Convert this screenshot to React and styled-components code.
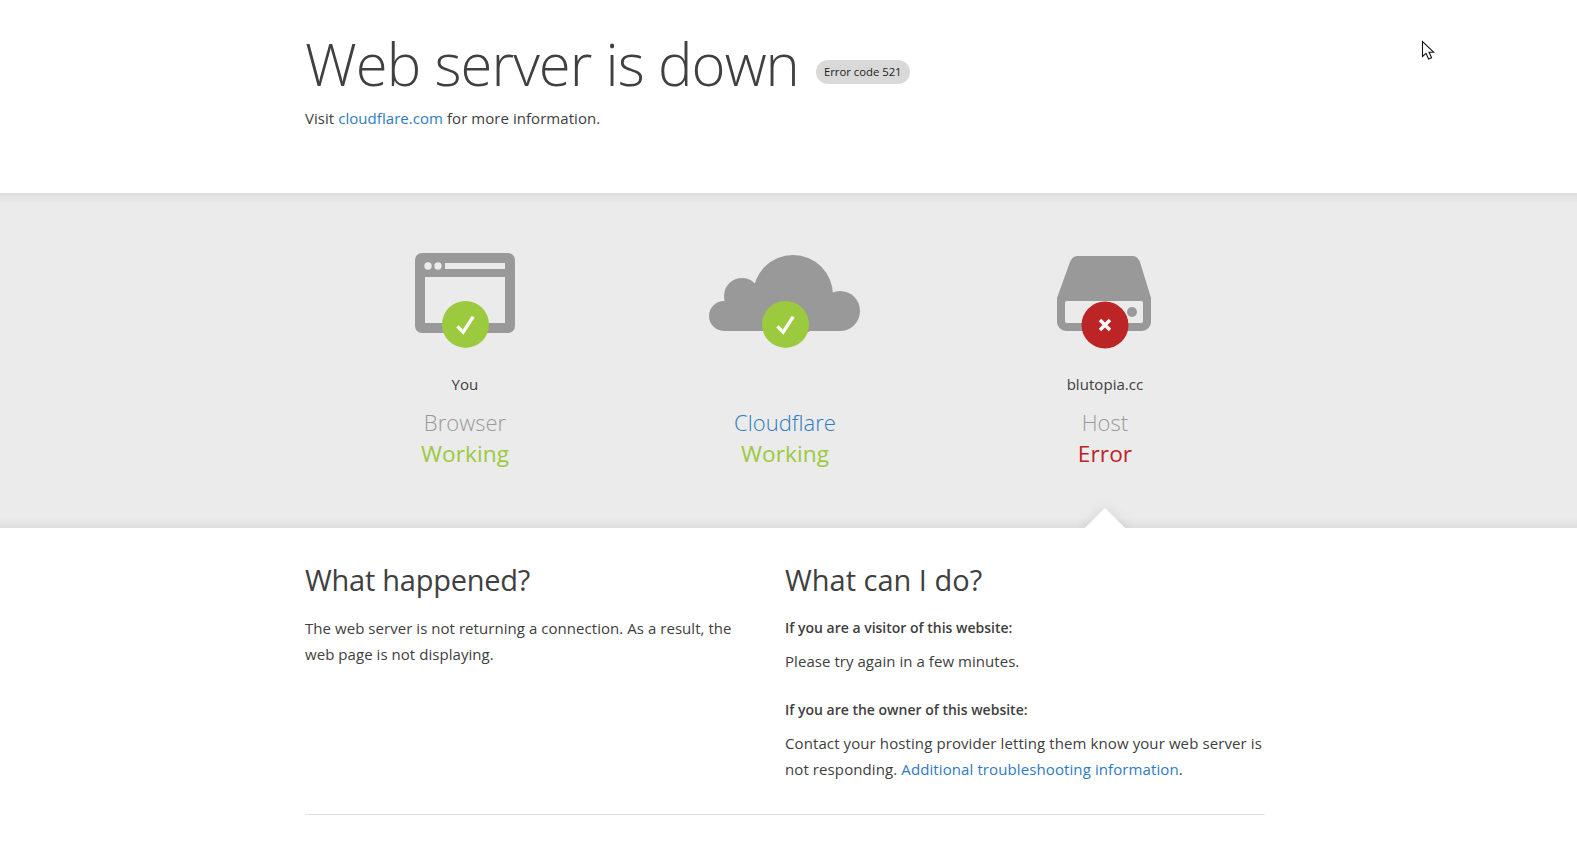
import React from "react";
import styled, { createGlobalStyle } from "styled-components";

const GlobalStyle = createGlobalStyle`
html, body { margin: 0; padding: 0; background: #fff; overflow: hidden; }
body {
  font-family: "Open Sans", "Noto Sans", "Liberation Sans", sans-serif;
  font-size: 15px;
  line-height: 26px;
  letter-spacing: 0.05px;
  color: #404040;
}
a { color: #2f7bbf; text-decoration: none; }
`;

const Page = styled.div`
  position: relative;
  height: 845px;
  overflow: hidden;
`;
const Section = styled.section`
  box-sizing: border-box;
  padding-right: 7px;
`;
const Wrapper = styled.div`
  width: 960px;
  margin: 0 auto;
`;
const Header = styled(Section)`
  height: 193px;
  padding-top: 28px;
`;
const TitleRow = styled.div`
  display: flex;
  align-items: center;
  height: 72px;
`;
const Title = styled.h1`
  margin: 0;
  font-size: 58px;
  font-weight: 300;
  line-height: 72px;
  letter-spacing: -0.93px;
  color: #404040;
`;
const ErrorCode = styled.span`
  margin: 16px 0 0 17px;
  padding: 0 8px;
  height: 24px;
  border-radius: 12px;
  background: #d9d9d9;
  font-size: 11.3px;
  line-height: 24px;
  letter-spacing: 0;
  color: #222;
`;
const SubTitle = styled.p`
  margin: 5px 0 0;
`;
const Overview = styled(Section)`
  position: relative;
  height: 335px;
  padding-top: 57px;
  overflow: hidden;
  background: linear-gradient(#dedede, #ebebeb 3%, #ebebeb 97%, #dedede);
`;
const Columns = styled.div`
  display: grid;
  grid-template-columns: repeat(3, 320px);
`;
const Column = styled.div`
  display: flex;
  flex-direction: column;
  align-items: center;
  text-align: center;
`;
const Icon = styled.svg`
  display: block;
  width: 160px;
  height: 100px;
`;
const Place = styled.div`
  height: 26px;
  margin-top: 21px;
  font-size: 15px;
  line-height: 26px;
  color: #404040;
`;
const Name = styled.div`
  margin-top: 10px;
  font-size: 22px;
  font-weight: 300;
  line-height: 31px;
  color: ${(p) => (p.$link ? "#2f7bbf" : "#999")};
`;
const Status = styled.div`
  font-size: 22.7px;
  line-height: 31px;
  color: ${(p) => (p.$error ? "#bd2426" : "#9bca3e")};
`;
const Arrow = styled.div`
  position: absolute;
  left: 1090px;
  top: 321px;
  width: 30px;
  height: 30px;
  background: #fff;
  transform: rotate(45deg);
  box-shadow: 0 0 14px rgba(0, 0, 0, 0.1);
`;
const Details = styled(Section)`
  padding-top: 30px;
`;
const TwoColumns = styled.div`
  display: grid;
  grid-template-columns: 480px 480px;
  height: 256px;
  border-bottom: 1px solid #dedede;
`;
const Block = styled.div`
  padding-right: ${(p) => p.$right ?? 24}px;
`;
const Heading = styled.h2`
  margin: 0 0 ${(p) => p.$after ?? 14}px;
  font-size: 29px;
  font-weight: 400;
  line-height: 44px;
  letter-spacing: ${(p) => p.$spacing ?? 0}px;
  color: #404040;
`;
const Text = styled.p`
  margin: 0 0 ${(p) => p.$after || 0}px;
  letter-spacing: ${(p) => p.$spacing ?? 0.05}px;
`;
const Strong = styled.h5`
  margin: 0 0 8px;
  font-size: 14px;
  font-weight: 600;
  line-height: 24px;
  letter-spacing: 0;
  color: #404040;
`;
const Cursor = styled.svg`
  position: absolute;
  left: 1421px;
  top: 40px;
  width: 14px;
  height: 22px;
`;

const Check = ({ cx, cy }) => (
  <path
    d={`M${cx - 8} ${cy + 2}l5.7 5.7 10-15.5`}
    fill="none"
    stroke="#fff"
    strokeWidth="3.4"
  />
);

const BrowserIcon = () => (
  <Icon viewBox="0 0 160 100">
    <path
      fillRule="evenodd"
      fill="#999"
      d="M37 3h86a7 7 0 0 1 7 7v66a7 7 0 0 1-7 7H37a7 7 0 0 1-7-7V10a7 7 0 0 1 7-7zM40 27v46h80V27zM60 13v6h60v-6z"
    />
    <circle cx="43" cy="16" r="3.7" fill="#ebebeb" />
    <circle cx="53" cy="16" r="3.7" fill="#ebebeb" />
    <circle cx="80.5" cy="74.4" r="23.5" fill="#9bca3e" />
    <Check cx={80.5} cy={74.4} />
  </Icon>
);

const CloudIcon = () => (
  <Icon viewBox="0 0 160 100">
    <g fill="#999">
      <circle cx="88" cy="45" r="40" />
      <circle cx="37" cy="46" r="18" />
      <circle cx="135" cy="61" r="20" />
      <circle cx="19" cy="66" r="15" />
      <rect x="19" y="51" width="116" height="30" />
    </g>
    <circle cx="80.5" cy="74.4" r="23.5" fill="#9bca3e" />
    <Check cx={80.5} cy={74.4} />
  </Icon>
);

const ServerIcon = () => (
  <Icon viewBox="0 0 160 100">
    <path
      fillRule="evenodd"
      fill="#999"
      d="M60 6h47c4 0 6 2 8 6l11 36v24a9 9 0 0 1-9 9H41a9 9 0 0 1-9-9V48l13-36c2-4 4-6 8-6zM42 51a2 2 0 0 0-2 2v18a2 2 0 0 0 2 2h74a2 2 0 0 0 2-2V53a2 2 0 0 0-2-2z"
    />
    <circle cx="107" cy="62" r="5" fill="#999" />
    <circle cx="80" cy="75" r="23.5" fill="#bd2426" />
    <path d="M75 70l10 10M85 70L75 80" stroke="#fff" strokeWidth="3.4" fill="none" />
  </Icon>
);

const App = () => (
  <Page>
    <GlobalStyle />
    <Header>
      <Wrapper>
        <TitleRow>
          <Title>Web server is down</Title>
          <ErrorCode>Error code 521</ErrorCode>
        </TitleRow>
        <SubTitle>
          Visit <a href="#">cloudflare.com</a> for more information.
        </SubTitle>
      </Wrapper>
    </Header>
    <Overview>
      <Wrapper>
        <Columns>
          <Column>
            <BrowserIcon />
            <Place>You</Place>
            <Name>Browser</Name>
            <Status>Working</Status>
          </Column>
          <Column>
            <CloudIcon />
            <Place />
            <Name $link>Cloudflare</Name>
            <Status>Working</Status>
          </Column>
          <Column>
            <ServerIcon />
            <Place>blutopia.cc</Place>
            <Name>Host</Name>
            <Status $error>Error</Status>
          </Column>
        </Columns>
      </Wrapper>
      <Arrow />
    </Overview>
    <Details>
      <Wrapper>
        <TwoColumns>
          <Block>
            <Heading $after={13} $spacing={-0.25}>What happened?</Heading>
            <Text>
              The web server is not returning a connection. As a result, the web page is not displaying.
            </Text>
          </Block>
          <Block $right={0}>
            <Heading>What can I do?</Heading>
            <Strong>If you are a visitor of this website:</Strong>
            <Text $after={24}>Please try again in a few minutes.</Text>
            <Strong>If you are the owner of this website:</Strong>
            <Text $spacing={0.1}>
              Contact your hosting provider letting them know your web server is not responding.{" "}
              <a href="#">Additional troubleshooting information</a>.
            </Text>
          </Block>
        </TwoColumns>
      </Wrapper>
    </Details>
    <Cursor viewBox="0 0 14 22">
      <path
        d="M1.5 1.5v15l3.5-3.2 2.6 5.7 3-1.3-2.6-5.5h4.6z"
        fill="#fff"
        stroke="#111"
        strokeWidth="1.1"
      />
    </Cursor>
  </Page>
);

export default App;
